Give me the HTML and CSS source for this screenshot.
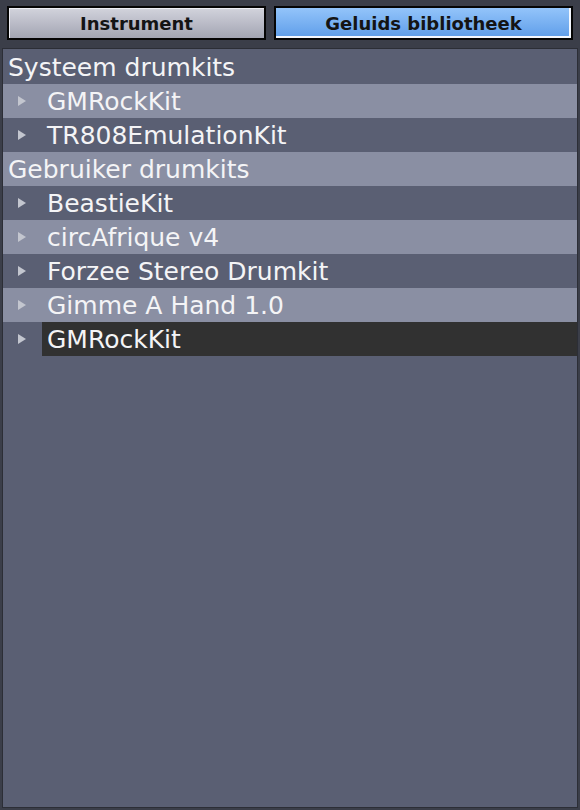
FILE: index.html
```html
<!DOCTYPE html>
<html>
<head>
<meta charset="utf-8">
<link rel="stylesheet" href="styles.css">
</head>
<body>
<div class="topbar">
  <div class="tab tab-instrument">Instrument</div>
  <div class="tab tab-active">Geluids bibliotheek</div>
</div>
<div class="panel">
  <div class="row header">Systeem drumkits</div>
  <div class="row item light"><span class="arrow"></span><span class="label">GMRockKit</span></div>
  <div class="row item"><span class="arrow"></span><span class="label">TR808EmulationKit</span></div>
  <div class="row header light">Gebruiker drumkits</div>
  <div class="row item"><span class="arrow"></span><span class="label">BeastieKit</span></div>
  <div class="row item light"><span class="arrow"></span><span class="label">circAfrique v4</span></div>
  <div class="row item"><span class="arrow"></span><span class="label">Forzee Stereo Drumkit</span></div>
  <div class="row item light"><span class="arrow"></span><span class="label">Gimme A Hand 1.0</span></div>
  <div class="row item"><span class="arrow"></span><span class="label selected">GMRockKit</span></div>
</div>
</body>
</html>
```
FILE: styles.css
```css
html, body {
  margin: 0;
  padding: 0;
  background: #3b3e49;
  width: 580px;
  height: 810px;
  overflow: hidden;
  font-family: "DejaVu Sans", sans-serif;
}
.topbar {
  display: flex;
  gap: 8px;
  padding: 6px 0 0 7px;
  height: 42px;
  box-sizing: border-box;
}
.tab {
  height: 34px;
  box-sizing: border-box;
  border: 2px solid #050505;
  display: flex;
  align-items: center;
  justify-content: center;
  font-weight: bold;
  font-size: 18px;
  color: #141414;
}
.tab-instrument {
  width: 259px;
  background: linear-gradient(#d2d3dc, #a3a5b3);
  box-shadow: inset 1px 1px 0 #eeeef4;
}
.tab-active {
  width: 299px;
  background: linear-gradient(#93c4fa, #5e9de9);
  box-shadow: inset -2px -2px 0 #f4f8ff;
}
.panel {
  margin: 6px 2px 2px 2px;
  height: 760px;
  box-sizing: border-box;
  border: 1px solid #2c2e36;
  background: #5a5f73;
  padding-top: 1px;
}
.row {
  height: 34px;
  display: flex;
  align-items: center;
  font-size: 25px;
  color: #f4f4f6;
  white-space: nowrap;
}
.row.light {
  background: #8a8fa3;
}
.header {
  padding-left: 5px;
}
.arrow {
  width: 0;
  height: 0;
  margin-left: 15px;
  border-top: 5px solid transparent;
  border-bottom: 5px solid transparent;
  border-left: 8px solid #c3c6cf;
}
.label {
  margin-left: 16px;
  padding-left: 5px;
  height: 34px;
  display: flex;
  align-items: center;
}
.label.selected {
  flex: 1;
  background: #313131;
}
```
